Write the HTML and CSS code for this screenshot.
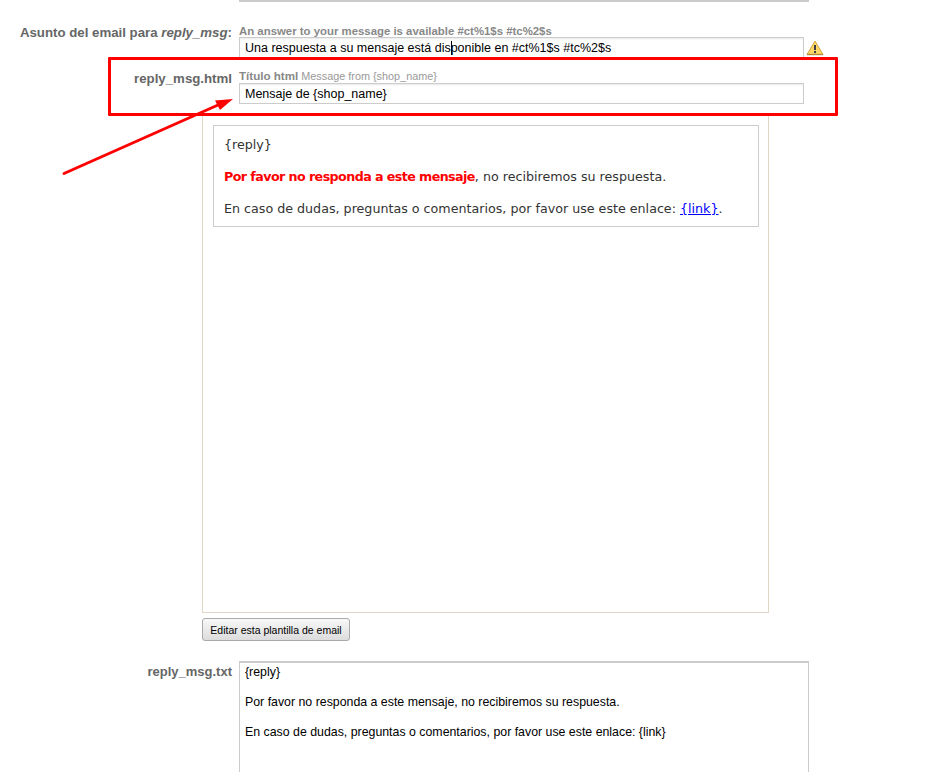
FILE: index.html
```html
<!DOCTYPE html>
<html lang="es">
<head>
<meta charset="utf-8">
<title>Plantillas de email</title>
<link rel="stylesheet" href="styles.css">
</head>
<body>
<main class="page">
  <div class="prev-area"></div>

  <section class="row subject-row">
    <div class="label">Asunto del email para <em>reply_msg</em>:</div>
    <div class="field">
      <div class="hint"><b>An answer to your message is available #ct%1$s #tc%2$s</b></div>
      <div class="input-line">
        <div class="input">Una respuesta a su mensaje está dis<span class="caret"></span>ponible en #ct%1$s #tc%2$s</div>
        <svg class="warn" width="18" height="16" viewBox="0 0 18 16" aria-hidden="true">
          <path d="M9 1 L17 14.5 H1 Z" fill="#fbd767" stroke="#d9a441" stroke-width="1" stroke-linejoin="round"/>
          <path d="M1 14.5 H17" stroke="#b58a3c" stroke-width="1.4"/>
          <rect x="8" y="5" width="2" height="5" fill="#3c3c46"/>
          <rect x="8" y="11" width="2" height="2" fill="#3c3c46"/>
        </svg>
      </div>
    </div>
  </section>

  <section class="row title-row">
    <div class="label">reply_msg.html</div>
    <div class="field">
      <div class="hint compact"><b>Título html</b> Message from {shop_name}</div>
      <div class="input-line">
        <div class="input">Mensaje de {shop_name}</div>
      </div>
    </div>
  </section>

  <div class="preview">
    <div class="mail">
      <p>{reply}</p>
      <p><strong>Por favor no responda a este mensaje</strong>, no recibiremos su respuesta.</p>
      <p>En caso de dudas, preguntas o comentarios, por favor use este enlace: <a href="#">{link}</a>.</p>
    </div>
  </div>

  <button class="edit" type="button">Editar esta plantilla de email</button>

  <section class="row text-row">
    <div class="label">reply_msg.txt</div>
    <div class="textarea">
      <p>{reply}</p>
      <p>Por favor no responda a este mensaje, no recibiremos su respuesta.</p>
      <p>En caso de dudas, preguntas o comentarios, por favor use este enlace: {link}</p>
    </div>
  </section>

  <div class="highlight"></div>
  <svg class="arrow" width="935" height="772" viewBox="0 0 935 772" aria-hidden="true">
    <path d="M64 173.5 L218 105" stroke="#f00" stroke-width="3" stroke-linecap="round" fill="none"/>
    <path d="M233 99 L215 100.5 L220 110 Z" fill="#f00"/>
  </svg>
</main>
</body>
</html>
```

FILE: styles.css
```css
html, body {
  margin: 0;
  padding: 0;
  background: #fff;
}

.page {
  position: relative;
  width: 935px;
  height: 772px;
  overflow: hidden;
  font-family: "Liberation Sans", Arial, sans-serif;
  font-size: 12px;
  color: #000;
}

.prev-area {
  box-sizing: border-box;
  width: 570px;
  height: 2px;
  margin-left: 239px;
  border: 2px solid #ccc;
  border-top: 0;
  border-width: 0 1px 2px;
}

.row {
  display: grid;
  grid-template-columns: 232px 1fr;
  column-gap: 7px;
}

.subject-row {
  margin-top: 22px;
}

.title-row {
  margin-top: 12px;
}

.label {
  padding-top: 1px;
  text-align: right;
  font-size: 13.25px;
  font-weight: bold;
  line-height: 16px;
  color: #666;
}

.hint {
  height: 13px;
  font-size: 11.4px;
  line-height: 15px;
  color: #999;
  white-space: nowrap;
}

.hint b {
  color: #888;
}

.hint.compact {
  font-size: 10.85px;
  line-height: 11px;
}

.hint.compact b {
  font-size: 11.6px;
}

.input-line {
  display: flex;
  align-items: center;
  gap: 2px;
}

.input {
  box-sizing: border-box;
  width: 565px;
  height: 21px;
  padding-left: 5px;
  border: 1px solid #ccc;
  background: #fff;
  box-shadow: inset 0 2px 2px -1px #e8e8e8;
  font-size: 12.5px;
  line-height: 21px;
  white-space: nowrap;
}

.caret {
  display: inline-block;
  width: 0;
  height: 14px;
  margin-right: -1px;
  border-left: 1px solid #000;
  vertical-align: -3px;
}

.warn {
  flex: none;
  margin-top: 1px;
}

.preview {
  box-sizing: border-box;
  width: 567px;
  height: 499px;
  margin: 10px 0 0 202px;
  padding: 10px 9px 0 10px;
  border: 1px solid #e0d8c4;
}

.mail {
  box-sizing: border-box;
  width: 546px;
  height: 102px;
  padding: 11px 10px 0;
  border: 1px solid #ccc;
  font-family: "DejaVu Sans", Verdana, sans-serif;
  font-size: 12.68px;
  line-height: 16px;
  color: #333;
}

.mail p {
  margin: 0 0 16px;
}

.mail strong {
  color: #f00;
  letter-spacing: -0.58px;
}

.mail a {
  color: #00f;
}

.edit {
  display: block;
  box-sizing: border-box;
  width: 148px;
  height: 23px;
  margin: 5px 0 0 202px;
  padding: 0;
  border: 1px solid #aaa;
  border-radius: 3px;
  background: linear-gradient(#f8f8f8, #dcdcdc);
  font-family: "Liberation Sans", Arial, sans-serif;
  font-size: 10.5px;
  color: #000;
}

.text-row {
  margin-top: 20px;
}

.text-row .label {
  padding-top: 3px;
  font-size: 13px;
}

.textarea {
  box-sizing: border-box;
  width: 570px;
  height: 200px;
  padding: 2px 5px;
  border: 1px solid #ccc;
  border-top-width: 2px;
  border-left-width: 1px;
  font-size: 12.35px;
  line-height: 15px;
}

.textarea p {
  margin: 0 0 15px;
}

.highlight {
  position: absolute;
  left: 108px;
  top: 57px;
  width: 724px;
  height: 53px;
  border: 3px solid #f00;
  border-radius: 1px;
}

.arrow {
  position: absolute;
  left: 0;
  top: 0;
  pointer-events: none;
}
```
